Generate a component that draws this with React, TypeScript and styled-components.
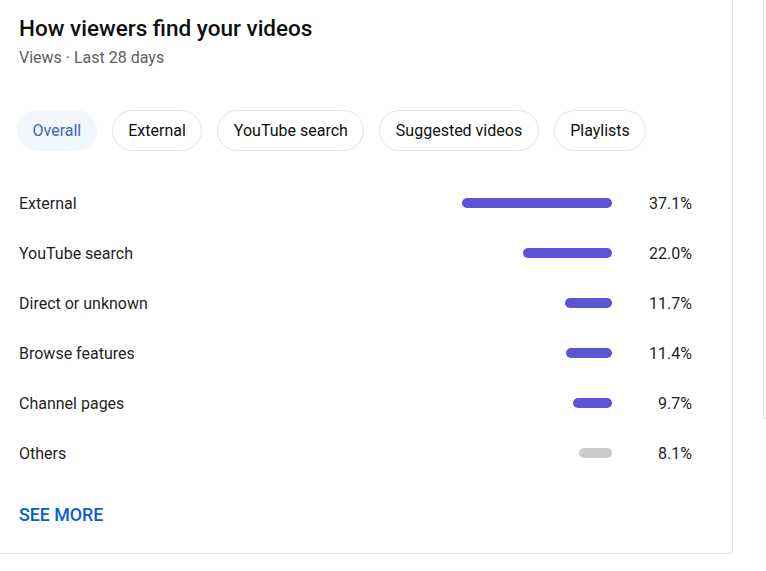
import styled, { createGlobalStyle } from 'styled-components'

const GlobalStyle = createGlobalStyle`
  html, body {
    margin: 0;
    padding: 0;
    background: #fff;
    font-family: Roboto, "Noto Sans", Arial, sans-serif;
    overflow: hidden;
  }
`

const Page = styled.div`
  display: flex;
  align-items: flex-start;
  gap: 30px;
  height: 571px;
`

const Card = styled.section`
  box-sizing: border-box;
  width: 733px;
  flex: none;
  margin-top: -12px;
  padding: 26px 0 20px 19px;
  border-right: 1px solid #e0e0e0;
  border-bottom: 1px solid #e0e0e0;
  border-bottom-right-radius: 4px;
`

const SideCard = styled.div`
  box-sizing: border-box;
  flex: 1;
  height: 431px;
  margin-top: -12px;
  border-left: 1px solid #e0e0e0;
  border-bottom: 1px solid #e0e0e0;
  border-bottom-left-radius: 4px;
`

const Title = styled.h2`
  margin: 0;
  font-size: 22.5px;
  font-weight: 500;
  line-height: 28px;
  color: #0f0f0f;
`

const Subtitle = styled.div`
  margin-top: 6px;
  font-size: 16px;
  line-height: 20px;
  color: #606060;
`

const Chips = styled.div`
  display: flex;
  gap: 15px;
  margin: 42px 0 0 -2px;
`

const Chip = styled.button<{ $active?: boolean }>`
  height: 41px;
  padding: 0 ${({ $active }) => ($active ? 14.5 : 15.5)}px;
  border-radius: 21px;
  font-family: inherit;
  font-size: 16px;
  cursor: pointer;
  border: 1px solid ${({ $active }) => ($active ? 'transparent' : '#e5e5e5')};
  background: ${({ $active }) => ($active ? '#f1f7fd' : '#fff')};
  color: ${({ $active }) => ($active ? '#3868c2' : '#0f0f0f')};
`

const Rows = styled.div`
  margin-top: 27px;
  display: flex;
  flex-direction: column;
`

const Row = styled.div`
  display: grid;
  grid-template-columns: 1fr 150px 80px;
  align-items: center;
  height: 50px;
  padding-right: 40px;
  font-size: 16px;
  color: #1f1f1f;
`

const BarTrack = styled.div`
  display: flex;
  justify-content: flex-end;
`

const Bar = styled.div<{ $muted?: boolean }>`
  height: 10px;
  border-radius: 5px;
  background: ${({ $muted }) => ($muted ? '#cccccc' : '#5b54d4')};
`

const Percent = styled.div`
  text-align: right;
`

const SeeMore = styled.a`
  display: block;
  width: fit-content;
  margin-top: 19px;
  font-size: 17.8px;
  font-weight: 500;
  line-height: 36px;
  color: #065fd4;
  text-decoration: none;
  cursor: pointer;
`

const chips = ['Overall', 'External', 'YouTube search', 'Suggested videos', 'Playlists']

const sources = [
  { label: 'External', value: 37.1 },
  { label: 'YouTube search', value: 22.0 },
  { label: 'Direct or unknown', value: 11.7 },
  { label: 'Browse features', value: 11.4 },
  { label: 'Channel pages', value: 9.7 },
  { label: 'Others', value: 8.1, muted: true },
]

const max = 37.1

export default function App() {
  return (
    <>
      <GlobalStyle />
      <Page>
        <Card>
          <Title>How viewers find your videos</Title>
          <Subtitle>Views · Last 28 days</Subtitle>
          <Chips>
            {chips.map((c, i) => (
              <Chip key={c} $active={i === 0} type="button">
                {c}
              </Chip>
            ))}
          </Chips>
          <Rows>
            {sources.map((s) => (
              <Row key={s.label}>
                <span>{s.label}</span>
                <BarTrack>
                  <Bar $muted={s.muted} style={{ width: `${(s.value / max) * 150}px` }} />
                </BarTrack>
                <Percent>{s.value.toFixed(1)}%</Percent>
              </Row>
            ))}
          </Rows>
          <SeeMore>SEE MORE</SeeMore>
        </Card>
        <SideCard />
      </Page>
    </>
  )
}
